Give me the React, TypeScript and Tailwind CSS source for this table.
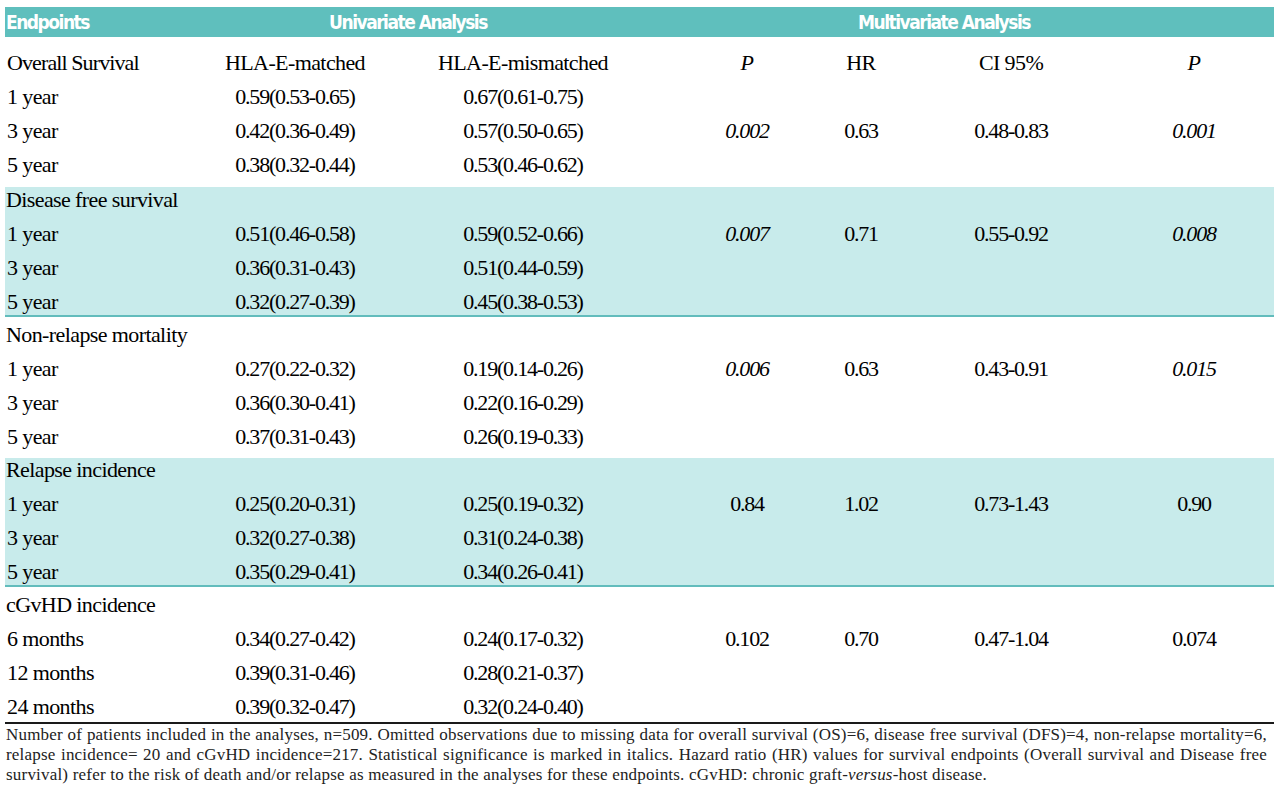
import React from 'react';

type Cell = { t: string; i?: boolean };
type Row = { label: string; m?: string; mm?: string; p?: Cell; hr?: string; ci?: string; p2?: Cell };

interface Section {
  title: string;
  head?: boolean;
  shaded: boolean;
  box: string;
  inner: string;
  rows: Row[];
}

const sections: Section[] = [
  {
    title: 'Overall Survival',
    head: true,
    shaded: false,
    box: 'h-[150px]',
    inner: 'pt-[8px]',
    rows: [
      { label: '1 year', m: '0.59(0.53-0.65)', mm: '0.67(0.61-0.75)' },
      { label: '3 year', m: '0.42(0.36-0.49)', mm: '0.57(0.50-0.65)', p: { t: '0.002', i: true }, hr: '0.63', ci: '0.48-0.83', p2: { t: '0.001', i: true } },
      { label: '5 year', m: '0.38(0.32-0.44)', mm: '0.53(0.46-0.62)' },
    ],
  },
  {
    title: 'Disease free survival',
    shaded: true,
    box: 'h-[130px]',
    inner: '-mt-[5px]',
    rows: [
      { label: '1 year', m: '0.51(0.46-0.58)', mm: '0.59(0.52-0.66)', p: { t: '0.007', i: true }, hr: '0.71', ci: '0.55-0.92', p2: { t: '0.008', i: true } },
      { label: '3 year', m: '0.36(0.31-0.43)', mm: '0.51(0.44-0.59)' },
      { label: '5 year', m: '0.32(0.27-0.39)', mm: '0.45(0.38-0.53)' },
    ],
  },
  {
    title: 'Non-relapse mortality',
    shaded: false,
    box: 'h-[141px]',
    inner: 'pt-0',
    rows: [
      { label: '1 year', m: '0.27(0.22-0.32)', mm: '0.19(0.14-0.26)', p: { t: '0.006', i: true }, hr: '0.63', ci: '0.43-0.91', p2: { t: '0.015', i: true } },
      { label: '3 year', m: '0.36(0.30-0.41)', mm: '0.22(0.16-0.29)' },
      { label: '5 year', m: '0.37(0.31-0.43)', mm: '0.26(0.19-0.33)' },
    ],
  },
  {
    title: 'Relapse incidence',
    shaded: true,
    box: 'h-[129px]',
    inner: '-mt-[6px]',
    rows: [
      { label: '1 year', m: '0.25(0.20-0.31)', mm: '0.25(0.19-0.32)', p: { t: '0.84' }, hr: '1.02', ci: '0.73-1.43', p2: { t: '0.90' } },
      { label: '3 year', m: '0.32(0.27-0.38)', mm: '0.31(0.24-0.38)' },
      { label: '5 year', m: '0.35(0.29-0.41)', mm: '0.34(0.26-0.41)' },
    ],
  },
  {
    title: 'cGvHD incidence',
    shaded: false,
    box: 'h-[135px]',
    inner: 'pt-0',
    rows: [
      { label: '6 months', m: '0.34(0.27-0.42)', mm: '0.24(0.17-0.32)', p: { t: '0.102' }, hr: '0.70', ci: '0.47-1.04', p2: { t: '0.074' } },
      { label: '12 months', m: '0.39(0.31-0.46)', mm: '0.28(0.21-0.37)' },
      { label: '24 months', m: '0.39(0.32-0.47)', mm: '0.32(0.24-0.40)' },
    ],
  },
];

const grid = 'grid grid-cols-[185px_210px_246px_152px_126px_174px_176px] h-[34px] shrink-0 items-center';
const num = 'text-center tracking-[-1.2px]';

const Val = ({ c }: { c?: Cell }) => (
  <div className={`${num} ${c?.i ? 'italic' : ''}`}>{c?.t ?? ''}</div>
);

const DataRow = ({ r }: { r: Row }) => (
  <div className={grid}>
    <div className="pl-[2px] whitespace-nowrap">{r.label}</div>
    <div className={num}>{r.m}</div>
    <div className={num}>{r.mm}</div>
    <div className="pl-[50px]"><Val c={r.p} /></div>
    <div className={num}>{r.hr}</div>
    <div className={num}>{r.ci}</div>
    <div className="pl-[16px]"><Val c={r.p2} /></div>
  </div>
);

export default function App() {
  return (
    <div className="w-[1280px] h-[798px] overflow-hidden bg-white pt-[7px] pl-[5px] text-black font-['Liberation_Serif',serif] text-[22px] tracking-[-0.6px]">
      <div className="w-[1269px]">
        {/* header bar */}
        <div className="grid grid-cols-[185px_436px_1fr] h-[30px] items-center bg-[#5fbfbd] text-white font-bold text-[19px] tracking-[-1.5px] font-['Liberation_Sans_Narrow','DejaVu_Sans_Condensed','Liberation_Sans',sans-serif] [font-stretch:condensed]">
          <div className="pl-[1px]">Endpoints</div>
          <div className="text-center">Univariate Analysis</div>
          <div className="text-center pr-[12px]">Multivariate Analysis</div>
        </div>

        {sections.map((s) => (
          <div
            key={s.title}
            className={`flex flex-col ${s.box} ${s.shaded ? 'bg-[#c8ebeb] border-b-2 border-[#62bcbc]' : ''}`}
          >
            <div className={`flex flex-col ${s.inner}`}>
              {s.head ? (
                <div className={grid}>
                  <div className="pl-[2px] whitespace-nowrap tracking-[-0.9px]">{s.title}</div>
                  <div className="text-center">HLA-E-matched</div>
                  <div className="text-center">HLA-E-mismatched</div>
                  <div className="pl-[50px] text-center italic">P</div>
                  <div className="text-center">HR</div>
                  <div className="text-center">CI 95%</div>
                  <div className="pl-[16px] text-center italic">P</div>
                </div>
              ) : (
                <div className={grid}>
                  <div className="col-span-3 pl-[1px] whitespace-nowrap">{s.title}</div>
                </div>
              )}
              {s.rows.map((r) => (
                <DataRow key={r.label} r={r} />
              ))}
            </div>
          </div>
        ))}

        <div className="border-t-2 border-[#1a1a1a]" />

        {/* footnote */}
        <div className="pl-[1px] pr-[7px] pt-[1px] text-[17px] leading-[20px] tracking-[0.2px] text-[#222] font-['Liberation_Serif',serif]">
          <div className="text-justify [text-align-last:justify] whitespace-nowrap">
            Number of patients included in the analyses, n=509. Omitted observations due to missing data for overall survival (OS)=6, disease free survival (DFS)=4, non-relapse mortality=6,
          </div>
          <div className="text-justify [text-align-last:justify] whitespace-nowrap">
            relapse incidence= 20 and cGvHD incidence=217. Statistical significance is marked in italics. Hazard ratio (HR) values for survival endpoints (Overall survival and Disease free
          </div>
          <div className="whitespace-nowrap">
            survival) refer to the risk of death and/or relapse as measured in the analyses for these endpoints. cGvHD: chronic graft-<span className="italic">versus</span>-host disease.
          </div>
        </div>
      </div>
    </div>
  );
}
